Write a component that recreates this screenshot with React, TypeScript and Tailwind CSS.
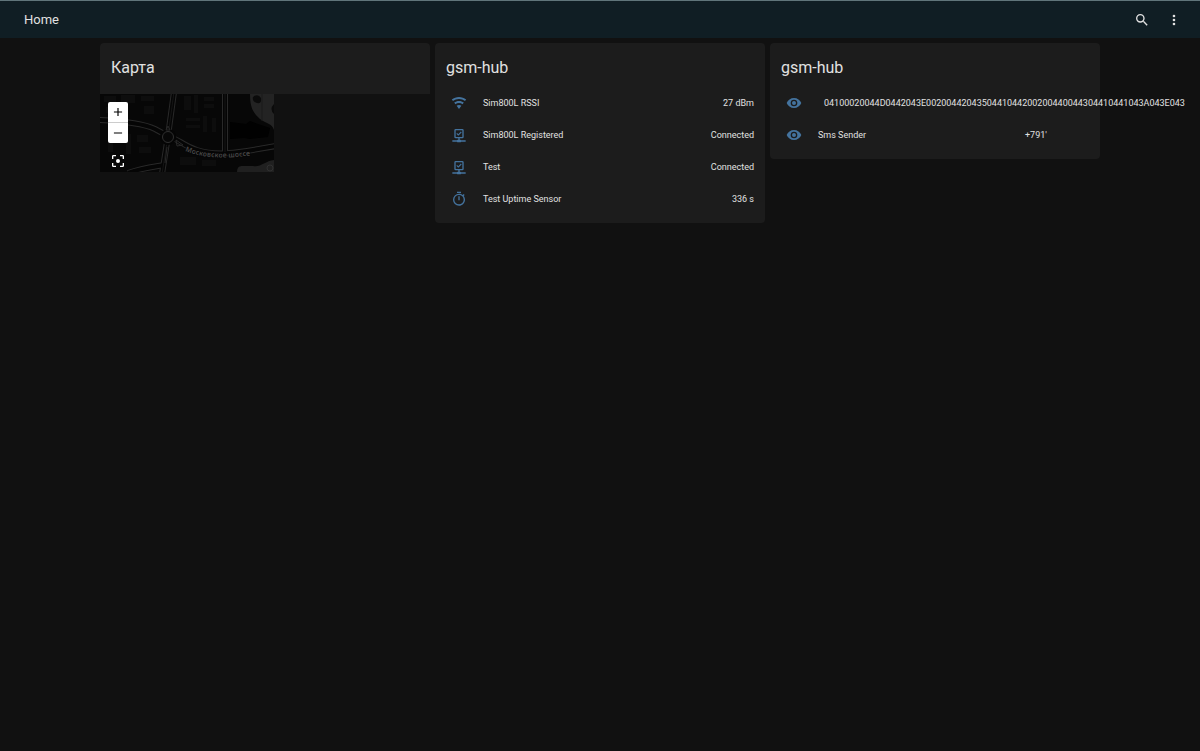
import type { ReactNode } from "react";

const icons = {
  magnify:
    "M9.5,3A6.5,6.5 0 0,1 16,9.5C16,11.11 15.41,12.59 14.44,13.73L14.71,14H15.5L20.5,19L19,20.5L14,15.5V14.71L13.73,14.44C12.59,15.41 11.11,16 9.5,16A6.5,6.5 0 0,1 3,9.5A6.5,6.5 0 0,1 9.5,3M9.5,5C7,5 5,7 5,9.5C5,12 7,14 9.5,14C12,14 14,12 14,9.5C14,7 12,5 9.5,5Z",
  dots: "M12,16A2,2 0 0,1 14,18A2,2 0 0,1 12,20A2,2 0 0,1 10,18A2,2 0 0,1 12,16M12,10A2,2 0 0,1 14,12A2,2 0 0,1 12,14A2,2 0 0,1 10,12A2,2 0 0,1 12,10M12,4A2,2 0 0,1 14,6A2,2 0 0,1 12,8A2,2 0 0,1 10,6A2,2 0 0,1 12,4Z",
  eye: "M12,9A3,3 0 0,0 9,12A3,3 0 0,0 12,15A3,3 0 0,0 15,12A3,3 0 0,0 12,9M12,17A5,5 0 0,1 7,12A5,5 0 0,1 12,7A5,5 0 0,1 17,12A5,5 0 0,1 12,17M12,4.5C7,4.5 2.73,7.61 1,12C2.73,16.39 7,19.5 12,19.5C17,19.5 21.27,16.39 23,12C21.27,7.61 17,4.5 12,4.5Z",
  wifi: "M12,21L15.6,16.2C14.6,15.45 13.35,15 12,15C10.65,15 9.4,15.45 8.4,16.2L12,21M12,3C7.95,3 4.21,4.34 1.2,6.6L3,9C5.5,7.12 8.62,6 12,6C15.38,6 18.5,7.12 21,9L22.8,6.6C19.79,4.34 16.05,3 12,3M12,9C9.3,9 6.81,9.89 4.8,11.4L6.6,13.8C8.1,12.67 9.97,12 12,12C14.03,12 15.9,12.67 17.4,13.8L19.2,11.4C17.19,9.89 14.7,9 12,9Z",
  network:
    "M15,20C15,19.45 14.55,19 14,19H13V17H17A2,2 0 0,0 19,15V5A2,2 0 0,0 17,3H7A2,2 0 0,0 5,5V15A2,2 0 0,0 7,17H11V19H10C9.45,19 9,19.45 9,20H2V22H9C9,22.55 9.45,23 10,23H14C14.55,23 15,22.55 15,22H22V20H15M7,15V5H17V15H7M10.9,13.2L8,10.2L9.2,9L10.9,10.7L14.8,6.8L16,8.1L10.9,13.2Z",
  timer:
    "M12,20A7,7 0 0,1 5,13A7,7 0 0,1 12,6A7,7 0 0,1 19,13A7,7 0 0,1 12,20M19.03,7.39L20.45,5.97C20,5.46 19.55,5 19.04,4.56L17.62,6C16.07,4.74 14.12,4 12,4A9,9 0 0,0 3,13A9,9 0 0,0 12,22C17,22 21,17.97 21,13C21,10.88 20.26,8.93 19.03,7.39M11,14H13V8H11M15,1H9V3H15V1Z",
  focus:
    "M12,9A3,3 0 0,0 9,12A3,3 0 0,0 12,15A3,3 0 0,0 15,12A3,3 0 0,0 12,9M19,19H15V21H19A2,2 0 0,0 21,19V15H19M19,3H15V5H19V9H21V5A2,2 0 0,0 19,3M5,5H9V3H5A2,2 0 0,0 3,5V9H5M5,15H3V19A2,2 0 0,0 5,21H9V19H5V15Z",
  plus: "M19,13H13V19H11V13H5V11H11V5H13V11H19V13Z",
  minus: "M19,13H5V11H19V13Z",
};

type IconName = keyof typeof icons;

function Icon({ name, className = "size-4" }: { name: IconName; className?: string }) {
  return (
    <svg viewBox="0 0 24 24" fill="currentColor" aria-hidden="true" className={`shrink-0 ${className}`}>
      <path fillRule="evenodd" d={icons[name]} />
    </svg>
  );
}

function Card({ title, children }: { title: string; children: ReactNode }) {
  return (
    <section className="rounded-sm bg-[#1c1c1c] pb-2">
      <h2 className="px-[11px] pt-[13px] pb-[7px] text-base leading-6">{title}</h2>
      <ul>{children}</ul>
    </section>
  );
}

function Row({ icon, label, children }: { icon: IconName; label?: string; children: ReactNode }) {
  return (
    <li className="flex h-8 items-center pr-[11px] pl-4 whitespace-nowrap">
      <Icon name={icon} className="mr-4 size-4 text-[#44739e]" />
      {label && <span className="grow">{label}</span>}
      {children}
    </li>
  );
}

const roads = [
  "M74,-2 L68,42 L62,80",
  "M-2,26 C20,27 42,29 55,35 L68,42",
  "M68,42 C78,45 84,52 97,56 C112,61 130,60 147,57 L176,52",
  "M125,-2 V58",
  "M28,79 C42,74 52,73 64,71",
];

const blocks = [
  [4, 2, 12, 6], [21, 1, 14, 8], [41, 2, 13, 5], [6, 13, 9, 6], [44, 12, 10, 8],
  [84, 2, 7, 14], [94, 1, 4, 18], [104, 3, 10, 4], [104, 10, 10, 4], [86, 24, 14, 3],
  [86, 31, 14, 3], [103, 22, 4, 16], [112, 24, 4, 14], [8, 36, 5, 22], [26, 40, 5, 20],
  [37, 41, 11, 7], [39, 53, 12, 6], [80, 63, 16, 8], [102, 66, 14, 6],
];

function CityMap() {
  return (
    <svg viewBox="0 0 174 78" className="block h-full w-full" role="img" aria-label="Карта">
      <rect width="174" height="78" fill="#070707" />
      {blocks.map(([x, y, w, h]) => (
        <rect key={`${x}-${y}`} x={x} y={y} width={w} height={h} fill="#0d0d0d" />
      ))}
      <path d="M130,28 L146,30 L150,27 L158,30 L170,34 L168,43 L150,45 L144,44 L130,45Z" fill="#010101" />
      <path d="M150,0 C150,13 153,19 160,25 C166,30 172,29 174,36 V0Z" fill="#232323" />
      <path d="M153,3 Q158,-1 161,4 Q162,10 157,9 Q152,8 153,3M174,10 Q169,15 174,20Z" fill="#0b0b0b" />
      <path d="M137,78 Q137,71 143,72 L153,72 C160,74 165,67 174,66 V78Z" fill="#202020" />
      <path d="M162,0 V27" stroke="#1a1a1a" fill="none" />
      <g fill="none" stroke="#292929" strokeWidth="6">
        {roads.map((d) => <path key={d} d={d} />)}
      </g>
      <g fill="none" stroke="#050505" strokeWidth="4">
        {roads.map((d) => <path key={d} d={d} />)}
      </g>
      <path d="M74,-2 L68,42 L62,80 M125,-2 V58" fill="none" stroke="#1d1d1d" strokeWidth="0.7" />
      <circle cx="68" cy="43" r="8" fill="#050505" />
      <circle cx="68" cy="43" r="5.5" fill="#070707" stroke="#303030" />
      <path d="M68,32 L66,36 H70Z M76,46 L77,52 L83,51Z M67,53 L65,69" fill="none" stroke="#292929" />
      <circle cx="170" cy="74" r="3" fill="none" stroke="#303030" />
      <path id="street" d="M85,57 C108,66 132,65 174,58" fill="none" />
      <text
        fill="#484848"
        stroke="#050505"
        strokeWidth="1.5"
        paintOrder="stroke"
        fontSize="7"
        fontWeight="600"
        fontFamily="'Noto Sans', sans-serif"
      >
        <textPath href="#street">Московское шоссе</textPath>
      </text>
    </svg>
  );
}

export default function App() {
  return (
    <div className="min-h-screen overflow-x-clip bg-[#111111] font-['Roboto',sans-serif] text-[9px] leading-4 text-[#e1e1e1]">
      <header className="flex h-[38px] items-center border-t border-[#60757a] bg-[#101e24] pr-[18px] pl-6">
        <h1 className="grow text-[13px] leading-5">Home</h1>
        <div className="flex items-center gap-4">
          <button aria-label="Search" className="block"><Icon name="magnify" /></button>
          <button aria-label="Menu" className="block"><Icon name="dots" /></button>
        </div>
      </header>
      <main className="mx-auto grid max-w-[1000px] grid-cols-3 items-start gap-[5px] pt-[5px]">
        <section>
          <h2 className="rounded-t-sm bg-[#1c1c1c] px-[11px] pt-[13px] pb-[14px] text-base leading-6">Карта</h2>
          <div className="relative h-[78px] w-[174px] overflow-hidden">
            <CityMap />
            <div className="absolute top-2 left-2 flex w-5 flex-col items-center">
              <div className="w-full divide-y divide-[#cccccc] overflow-hidden rounded-xs bg-white text-black">
                <button aria-label="Zoom in" className="flex h-[21px] w-full items-center justify-center">
                  <Icon name="plus" className="size-[14px]" />
                </button>
                <button aria-label="Zoom out" className="flex h-5 w-full items-center justify-center">
                  <Icon name="minus" className="size-[14px]" />
                </button>
              </div>
              <button aria-label="Reset focus" className="mt-[10px] block text-white">
                <Icon name="focus" />
              </button>
            </div>
          </div>
        </section>
        <Card title="gsm-hub">
          <Row icon="wifi" label="Sim800L RSSI">27 dBm</Row>
          <Row icon="network" label="Sim800L Registered">Connected</Row>
          <Row icon="network" label="Test">Connected</Row>
          <Row icon="timer" label="Test Uptime Sensor">336 s</Row>
        </Card>
        <Card title="gsm-hub">
          <Row icon="eye">
            <span className="ml-[6px]">04100020044D0442043E0020044204350441044200200440044304410441043A043E043</span>
          </Row>
          <Row icon="eye" label="Sms Sender">
            <span className="w-16">+791'</span>
          </Row>
        </Card>
      </main>
    </div>
  );
}
